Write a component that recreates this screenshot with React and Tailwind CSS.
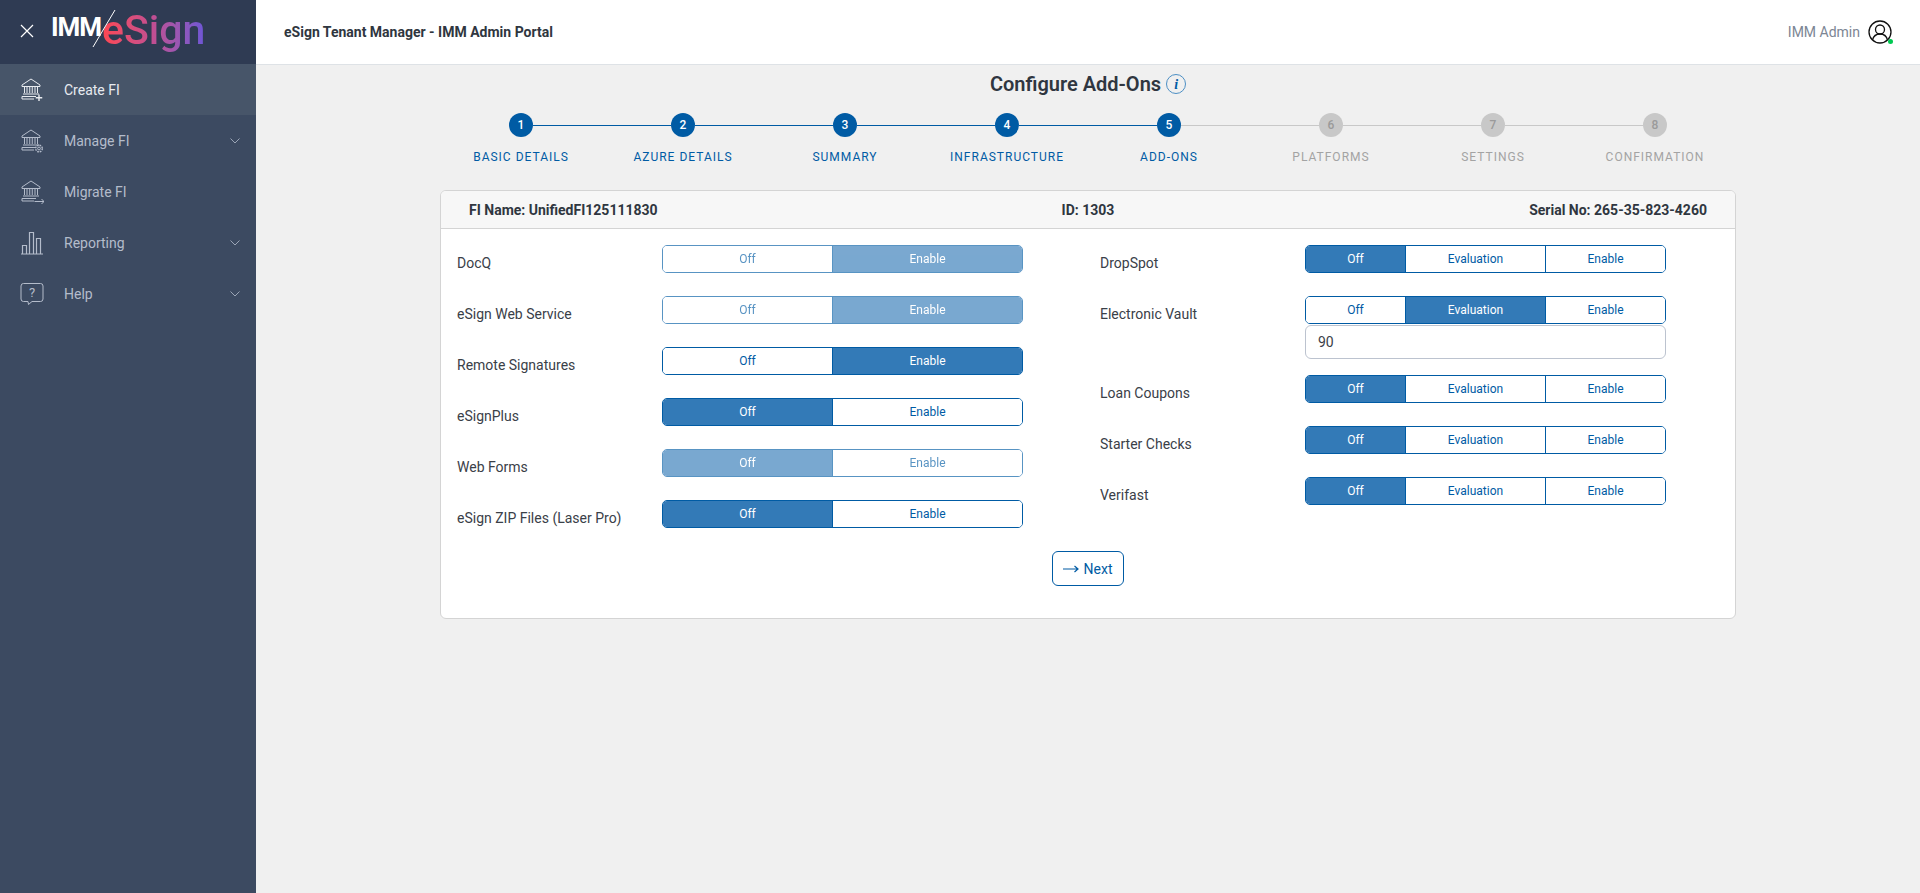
import { useState } from 'react';

const steps = ['Basic Details', 'Azure Details', 'Summary', 'Infrastructure', 'Add-Ons', 'Platforms', 'Settings', 'Confirmation'];

const leftRows = [
    { label: 'DocQ', widths: ['w-[170px]', 'flex-1'], options: ['Off', 'Enable'], active: 1, disabled: true },
    { label: 'eSign Web Service', widths: ['w-[170px]', 'flex-1'], options: ['Off', 'Enable'], active: 1, disabled: true },
    { label: 'Remote Signatures', widths: ['w-[170px]', 'flex-1'], options: ['Off', 'Enable'], active: 1 },
    { label: 'eSignPlus', widths: ['w-[170px]', 'flex-1'], options: ['Off', 'Enable'], active: 0 },
    { label: 'Web Forms', widths: ['w-[170px]', 'flex-1'], options: ['Off', 'Enable'], active: 0, disabled: true },
    { label: 'eSign ZIP Files (Laser Pro)', widths: ['w-[170px]', 'flex-1'], options: ['Off', 'Enable'], active: 0 },
];

const threeWay = ['Off', 'Evaluation', 'Enable'];
const threeWidths = ['w-[100px]', 'w-[140px]', 'flex-1'];

const rightRows = [
    { label: 'DropSpot', active: 0 },
    { label: 'Electronic Vault', active: 1, days: '90' },
    { label: 'Loan Coupons', active: 0 },
    { label: 'Starter Checks', active: 0 },
    { label: 'Verifast', active: 0 },
];

// Bank outline shared by the first three menu icons
function BankBase() {
    return (
        <>
            <path d="M2 7 11 1l9 6v1.500H2z" />
            <path d="M4.500 9v6M7 9v6M9.750 9v6M12.250 9v6M15 9v6M17.500 9v6" />
            <path d="M3 16h16M2 18.500h14M2 18.500v2.500h12" />
        </>
    );
}

function MenuIcon({ type }) {
    return (
        <svg viewBox="0 0 24 24" fill="none" stroke="currentColor" strokeWidth="1" className="w-6 h-6 shrink-0">
            {type === 'create' && (
                <>
                    <BankBase />
                    <path d="M19 16.500v6.500M15.750 19.750h6.500" strokeWidth="1.4" />
                </>
            )}
            {type === 'manage' && (
                <>
                    <BankBase />
                    <circle cx="19" cy="19.500" r="1.400" />
                    <circle cx="19" cy="19.500" r="3.300" strokeWidth="1.400" strokeDasharray="1.700 0.900" />
                </>
            )}
            {type === 'migrate' && (
                <>
                    <BankBase />
                    <path d="M14.500 21.500H24M21.500 19l2.500 2.500-2.500 2.500" />
                </>
            )}
            {type === 'report' && (
                <path d="M1 23h22M2.500 22.500v-8h4v8M9.500 22.500V1.500h4v21M16.500 22.500V7.500h4v15" strokeWidth="1.2" />
            )}
            {type === 'help' && (
                <>
                    <path d="M3.500 1.500h17a2.500 2.500 0 0 1 2.500 2.500v13a2.500 2.500 0 0 1-2.500 2.500H12l-3.500 3-.5-3H3.500A2.500 2.500 0 0 1 1 17V4a2.500 2.500 0 0 1 2.500-2.500z" />
                    <text x="12" y="15" textAnchor="middle" fontSize="13" fill="currentColor" stroke="none" fontFamily="Roboto, sans-serif">?</text>
                </>
            )}
        </svg>
    );
}

function Chevron() {
    return (
        <svg viewBox="0 0 10 6" fill="none" stroke="currentColor" strokeWidth="0.8" className="w-[10px] h-[6px] ml-auto">
            <path d="M.5.500 5 5 9.500.500" />
        </svg>
    );
}

function MenuItem({ icon, label, active, arrow }) {
    return (
        <div className={`h-[51px] flex items-center pl-5 pr-4 text-sm ${active ? 'bg-[#475569] text-[#e8ebf0]' : 'text-[#b4bccb]'}`}>
            <MenuIcon type={icon} />
            <span className="ml-5">{label}</span>
            {arrow && <Chevron />}
        </div>
    );
}

function Logo() {
    return (
        <div className="relative flex items-center ml-[17px] h-[64px]">
            <span className="w-[52px] text-[26px] font-bold text-white leading-none tracking-[-1px] mb-[10px]">IMM</span>
            <svg viewBox="0 0 24 40" className="absolute left-[41px] top-[9px] w-6 h-10" stroke="#fff" strokeWidth="1" fill="none">
                <path d="M23 1 1 38" />
            </svg>
            <span className="ml-[-1px] text-[41px] font-medium leading-none pb-[3px] bg-gradient-to-r from-[#ff4650] via-[#c04e92] to-[#6d55d6] bg-clip-text text-transparent">eSign</span>
        </div>
    );
}

function Sidebar() {
    return (
        <aside className="w-[256px] shrink-0 bg-[#3c4a61] flex flex-col">
            <div className="h-[64px] bg-[#2f3b53] flex items-center pl-5">
                <svg viewBox="0 0 14 14" className="w-[14px] h-[14px] shrink-0 mt-[-2px]" stroke="#fff" strokeWidth="1.2" fill="none">
                    <path d="M1 1l12 12M13 1 1 13" />
                </svg>
                <Logo />
            </div>
            <MenuItem icon="create" label="Create FI" active />
            <MenuItem icon="manage" label="Manage FI" arrow />
            <MenuItem icon="migrate" label="Migrate FI" />
            <MenuItem icon="report" label="Reporting" arrow />
            <MenuItem icon="help" label="Help" arrow />
        </aside>
    );
}

function Header() {
    return (
        <header className="h-[65px] shrink-0 bg-white border-b border-[#dee2e6] flex items-center pl-[28px] pr-[28px]">
            <span className="text-sm font-bold text-[#2f3640] mt-[-1px]">eSign Tenant Manager - IMM Admin Portal</span>
            <div className="ml-auto flex items-center gap-2 mt-[-1px]">
                <span className="text-sm text-[#7c8694]">IMM Admin</span>
                <div className="relative w-6 h-6">
                    <svg viewBox="0 0 24 24" fill="none" stroke="#111" strokeWidth="1.3" className="w-6 h-6">
                        <circle cx="12" cy="12" r="11" />
                        <circle cx="12" cy="9.500" r="4.500" />
                        <path d="M4.500 20c1-4 3.500-6 7.500-6s6.500 2 7.500 6" />
                    </svg>
                    <span className="absolute right-[-1px] bottom-[0px] w-[5px] h-[5px] rounded-full bg-green-500"></span>
                </div>
            </div>
        </header>
    );
}

function Stepper() {
    return (
        <div className="flex justify-center mt-[13px]">
            {steps.map((name, i) => {
                const done = i < 5;
                return (
                    <div key={name} className="w-[162px] flex flex-col items-center">
                        <div className="w-full flex items-center">
                            <div className={`flex-1 h-[1px] ${i === 0 ? 'bg-transparent' : done ? 'bg-[#005ba4]' : 'bg-[#c8c8c8]'}`}></div>
                            <div className={`w-6 h-6 rounded-full flex items-center justify-center text-xs font-medium ${done ? 'bg-[#005ba4] text-white' : 'bg-[#c8c8c8] text-[#9a9a9a]'}`}>
                                {i + 1}
                            </div>
                            <div className={`flex-1 h-[1px] ${i === 7 ? 'bg-transparent' : i < 4 ? 'bg-[#005ba4]' : 'bg-[#c8c8c8]'}`}></div>
                        </div>
                        <span className={`mt-[11px] text-xs leading-[18px] uppercase tracking-[1px] ${done ? 'text-[#005ba4]' : 'text-[#a3a3a3]'}`}>{name}</span>
                    </div>
                );
            })}
        </div>
    );
}

function Toggle({ options, widths, active, disabled }) {
    const [current, setCurrent] = useState(active);
    return (
        <div className={`w-[361px] h-[28px] flex rounded-[5px] border border-[#005ba4] overflow-hidden ${disabled ? 'opacity-65' : ''}`}>
            {options.map((opt, i) => (
                <button
                    key={opt}
                    type="button"
                    onClick={() => !disabled && setCurrent(i)}
                    className={`${widths[i]} text-xs ${i < options.length - 1 ? 'border-r border-[#005ba4]' : ''} ${current === i ? 'bg-[#337ab7] text-white' : 'bg-white text-[#005ba4]'}`}
                >
                    {opt}
                </button>
            ))}
        </div>
    );
}

function AddOnRow({ label, children, tall }) {
    return (
        <div className={`flex items-start ${tall ? 'mb-[16px]' : 'mb-[23px]'}`}>
            <div className="w-[205px] shrink-0 pt-2 text-sm leading-5 text-[#3a4048]">{label}</div>
            <div className="w-[361px]">{children}</div>
        </div>
    );
}

function AddOnsCard() {
    return (
        <div className="w-[1296px] mx-auto mt-[24px] h-[429px] bg-white border border-[#d4d4d4] rounded-[6px] overflow-hidden">
            <div className="h-[38px] bg-[#f7f7f7] border-b border-[#d4d4d4] grid grid-cols-3 items-center px-[28px] text-sm font-bold text-[#2f3640]">
                <span>FI Name: UnifiedFI125111830</span>
                <span className="text-center">ID: 1303</span>
                <span className="text-right">Serial No: 265-35-823-4260</span>
            </div>
            <div className="flex pl-4 pt-4">
                <div className="w-[643px]">
                    {leftRows.map((row) => (
                        <AddOnRow key={row.label} label={row.label}>
                            <Toggle options={row.options} widths={row.widths} active={row.active} disabled={row.disabled} />
                        </AddOnRow>
                    ))}
                </div>
                <div className="w-[566px]">
                    {rightRows.map((row) => (
                        <AddOnRow key={row.label} label={row.label} tall={!!row.days}>
                            <Toggle options={threeWay} widths={threeWidths} active={row.active} />
                            {row.days && (
                                <input
                                    defaultValue={row.days}
                                    className="w-full h-[34px] mt-[1px] px-3 text-sm text-[#3a4048] border border-[#bcc3cf] rounded-md outline-none"
                                />
                            )}
                        </AddOnRow>
                    ))}
                </div>
            </div>
            <div className="flex justify-center pr-[1px]">
                <button type="button" className="w-[72px] h-[35px] flex items-center justify-center gap-[5px] text-sm text-[#005ba4] border border-[#005ba4] rounded-md bg-white">
                    <svg viewBox="0 0 16 10" fill="none" stroke="currentColor" strokeWidth="1.2" className="w-4 h-[10px]">
                        <path d="M0 5h15M11.500 2 15 5l-3.500 3" />
                    </svg>
                    Next
                </button>
            </div>
        </div>
    );
}

export default function App() {
    return (
        <div className="h-screen flex font-['Roboto',sans-serif] bg-[#f0f0f0] overflow-hidden">
            <Sidebar />
            <div className="flex-1 flex flex-col min-w-0">
                <Header />
                <main className="flex-1">
                    {/* title */}
                    <div className="h-[32px] flex items-center justify-center gap-[5px] mt-[3px]">
                        <h1 className="text-xl font-semibold text-[#2f3640]">Configure Add-Ons</h1>
                        <span className="w-5 h-5 rounded-full border border-[#4d8fc4] flex items-center justify-center text-[14px] font-bold italic text-[#005ba4] font-['Liberation_Serif',serif]">i</span>
                    </div>
                    <Stepper />
                    <AddOnsCard />
                </main>
            </div>
        </div>
    );
}
